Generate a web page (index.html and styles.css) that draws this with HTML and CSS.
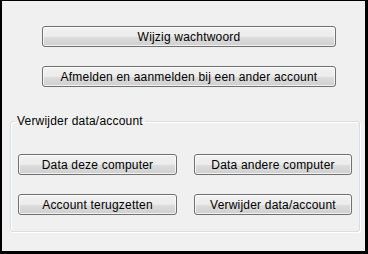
FILE: index.html
```html
<!DOCTYPE html>
<html>
<head>
    <title>Account</title>
    <link rel="stylesheet" href="styles.css">
</head>
<body>
    <div class="window">
        <div class="actions">
            <button class="btn">Wijzig wachtwoord</button>
            <button class="btn">Afmelden en aanmelden bij een ander account</button>
        </div>

        <fieldset class="group">
            <legend>Verwijder data/account</legend>
            <div class="group-grid">
                <button class="btn">Data deze computer</button>
                <button class="btn">Data andere computer</button>
                <button class="btn">Account terugzetten</button>
                <button class="btn">Verwijder data/account</button>
            </div>
        </fieldset>
    </div>
</body>
</html>
```

FILE: styles.css
```css
* {
    margin: 0;
    padding: 0;
    box-sizing: border-box;
    font-family: 'Liberation Sans', Arial, sans-serif;
}

body {
    background: #000;
}

.window {
    width: 368px;
    height: 254px;
    background: #f0f0f0;
    border-style: solid;
    border-color: #000;
    border-width: 1px 3px 3px 2px;
    color: #000;
    font-size: 12px;
    letter-spacing: 0.2px;
}

.actions {
    display: flex;
    flex-direction: column;
    gap: 19px;
    padding: 25px 0 0 40px;
}

.actions .btn {
    width: 294px;
}

.btn {
    height: 21px;
    border: 1px solid #707070;
    border-radius: 3px;
    background: linear-gradient(to bottom, #f2f2f2 0%, #ebebeb 50%, #dddddd 51%, #cfcfcf 100%);
    box-shadow: inset 0 0 0 1px rgba(255, 255, 255, 0.7);
    font-size: 12px;
    letter-spacing: 0.2px;
    color: #000;
    text-align: center;
}

.group {
    margin: 27px 0 0 8px;
    width: 350px;
    height: 118px;
    border: 1px solid #d5dfe5;
    border-radius: 3px;
    box-shadow: inset 1px 1px 0 #fff, 1px 1px 0 #fff;
    padding: 0 7px;
}

.group legend {
    margin-left: -3px;
    padding: 0 2px;
    font-size: 12px;
}

.group-grid {
    display: grid;
    grid-template-columns: 159px 158px;
    column-gap: 17px;
    row-gap: 19px;
    padding-top: 26px;
}

.group-grid .btn {
    width: 100%;
}
```
